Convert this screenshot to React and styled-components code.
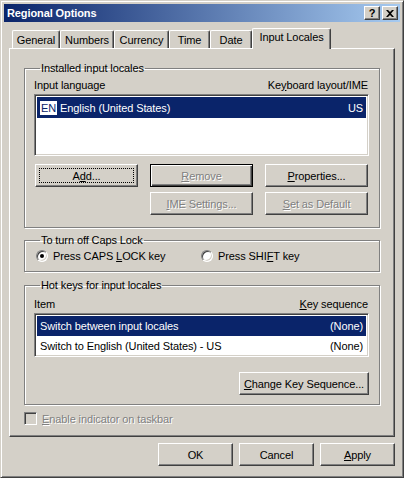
import React from 'react'
import styled, { createGlobalStyle } from 'styled-components'

const GlobalStyle = createGlobalStyle`
  html, body {
    margin: 0;
    padding: 0;
    background: #d4d0c8;
  }
  body {
    font-family: "Liberation Sans", Tahoma, sans-serif;
    font-size: 11px;
    letter-spacing: -0.1px;
    color: #000;
  }
`

const Window = styled.div`
  width: 404px;
  height: 478px;
  box-sizing: border-box;
  background: #d4d0c8;
  border: 1px solid;
  border-color: #d4d0c8 #404040 #404040 #d4d0c8;
  box-shadow: inset 1px 1px #fff, inset -1px -1px #808080;
  padding: 3px;
  display: flex;
  flex-direction: column;
`

const TitleBar = styled.div`
  height: 18px;
  display: flex;
  align-items: center;
  padding: 0 2px 0 2px;
  background: linear-gradient(to right, #0a246a, #a6caf0);
  color: #fff;
  font-weight: bold;
  font-size: 11px;
`

const TitleText = styled.span`
  flex: 1;
  padding-left: 1px;
`

const CaptionButton = styled.div`
  width: 16px;
  height: 14px;
  box-sizing: border-box;
  margin-left: ${p => p.$gap || 0}px;
  background: #d4d0c8;
  border: 1px solid;
  border-color: #fff #404040 #404040 #fff;
  box-shadow: inset -1px -1px #808080;
  display: flex;
  align-items: center;
  justify-content: center;
  color: #000;
  font-weight: bold;
  font-size: 11px;
  line-height: 1;
`

const Body = styled.div`
  padding: 6px 5px 0 5px;
  display: flex;
  flex-direction: column;
`

const TabRow = styled.div`
  height: 20px;
  display: flex;
  align-items: flex-end;
  padding-left: 3px;
`

const Tab = styled.div`
  width: ${p => p.$w}px;
  height: ${p => (p.$active ? 21 : 18)}px;
  margin-bottom: ${p => (p.$active ? -1 : 0)}px;
  box-sizing: border-box;
  position: relative;
  z-index: ${p => (p.$active ? 1 : 0)};
  background: #d4d0c8;
  border-top: 1px solid #fff;
  border-left: 1px solid #fff;
  border-right: 1px solid #404040;
  border-radius: 2px 2px 0 0;
  box-shadow: inset -1px 0 #808080;
  display: flex;
  align-items: ${p => (p.$active ? 'flex-start' : 'center')};
  padding-top: ${p => (p.$active ? 2 : 0)}px;
  justify-content: center;
  white-space: nowrap;
`

const Panel = styled.div`
  height: 389px;
  box-sizing: border-box;
  border: 1px solid;
  border-color: #fff #404040 #404040 #fff;
  box-shadow: inset -1px -1px #808080;
  padding: 13px 14px 0 14px;
  display: flex;
  flex-direction: column;
`

const Group = styled.fieldset`
  margin: ${p => p.$top || 0}px 0 0 0;
  padding: ${p => p.$pt}px 10px ${p => p.$pb}px 9px;
  border: 1px solid #808080;
  box-shadow: inset 1px 1px #fff, 1px 1px #fff;
  min-width: 0;
`

const Legend = styled.legend`
  padding: 0 1px;
  margin-left: 6px;
  line-height: 13px;
`

const HeaderRow = styled.div`
  display: flex;
  justify-content: space-between;
  line-height: 13px;
  padding: 0 1px 0 0;
`

const ListBox = styled.div`
  margin-top: 2px;
  height: ${p => p.$h}px;
  box-sizing: border-box;
  background: #fff;
  border: 1px solid;
  border-color: #808080 #fff #fff #808080;
  box-shadow: inset 1px 1px #404040, inset -1px -1px #d4d0c8;
  padding: 2px;
`

const ListRow = styled.div`
  height: ${p => p.$h || 20}px;
  display: flex;
  align-items: center;
  justify-content: space-between;
  padding: 0 3px 0 3px;
  background: ${p => (p.$selected ? '#0a246a' : 'transparent')};
  color: ${p => (p.$selected ? '#fff' : '#000')};
  white-space: nowrap;
`

const LangTag = styled.span`
  display: inline-block;
  background: #fff;
  color: #0a246a;
  padding: 0 1px;
  margin-right: 3px;
  line-height: 14px;
`

const ButtonGrid = styled.div`
  margin-top: 8px;
  display: grid;
  grid-template-columns: repeat(3, 103px);
  grid-auto-rows: 23px;
  column-gap: 12px;
  row-gap: 5px;
  padding-left: 1px;
`

const Button = styled.div`
  position: relative;
  grid-column: ${p => p.$col || 'auto'};
  width: ${p => (p.$w ? `${p.$w}px` : 'auto')};
  height: 23px;
  box-sizing: border-box;
  background: #d4d0c8;
  border: 1px solid;
  border-color: ${p => (p.$default ? '#000' : '#fff #404040 #404040 #fff')};
  box-shadow: ${p =>
    p.$default
      ? 'inset 1px 1px #fff, inset -1px -1px #404040, inset -2px -2px #808080'
      : 'inset -1px -1px #808080, inset 1px 1px #d4d0c8'};
  display: flex;
  align-items: center;
  justify-content: center;
  white-space: nowrap;
  color: ${p => (p.$disabled ? '#808080' : '#000')};
  text-shadow: ${p => (p.$disabled ? '1px 1px #fff' : 'none')};

  &::after {
    content: '';
    display: ${p => (p.$focus ? 'block' : 'none')};
    position: absolute;
    inset: 3px;
    border: 1px dotted #000;
  }
`

const RadioRow = styled.div`
  height: 16px;
  display: flex;
  align-items: center;
`

const RadioOption = styled.label`
  display: flex;
  align-items: center;
  width: ${p => p.$w}px;
  padding-left: 2px;
`

const RadioCircle = styled.span`
  position: relative;
  width: 12px;
  height: 12px;
  box-sizing: border-box;
  border-radius: 50%;
  background: #fff;
  border: 1px solid;
  border-color: #808080 #fff #fff #808080;
  box-shadow: inset 1px 1px #404040, inset -1px -1px #d4d0c8;
  margin-right: 5px;

  &::after {
    content: '';
    display: ${p => (p.$checked ? 'block' : 'none')};
    position: absolute;
    left: 3px;
    top: 3px;
    width: 4px;
    height: 4px;
    border-radius: 50%;
    background: #000;
  }
`

const ActionRow = styled.div`
  display: flex;
  justify-content: flex-end;
  margin-top: 15px;
`

const CheckRow = styled.div`
  margin-top: 7px;
  display: flex;
  align-items: center;
  color: #808080;
  text-shadow: 1px 1px #fff;
`

const CheckBox = styled.span`
  width: 13px;
  height: 13px;
  box-sizing: border-box;
  background: #d4d0c8;
  border: 1px solid;
  border-color: #808080 #fff #fff #808080;
  box-shadow: inset 1px 1px #404040, inset -1px -1px #d4d0c8;
  margin-right: 5px;
`

const FooterRow = styled.div`
  margin-top: 6px;
  display: flex;
  justify-content: flex-end;
  gap: 6px;
`

const tabs = [
  { label: 'General', w: 48 },
  { label: 'Numbers', w: 54 },
  { label: 'Currency', w: 55 },
  { label: 'Time', w: 41 },
  { label: 'Date', w: 42 },
  { label: 'Input Locales', w: 79, active: true },
]

const CloseGlyph = () => (
  <svg width="8" height="7" viewBox="0 0 8 7">
    <path d="M0 0h2l2 2 2-2h2L5 3.5 8 7H6L4 5 2 7H0l3-3.5z" fill="#000" />
  </svg>
)

export default function App() {
  return (
    <>
      <GlobalStyle />
      <Window>
        <TitleBar>
          <TitleText>Regional Options</TitleText>
          <CaptionButton>?</CaptionButton>
          <CaptionButton $gap={2}><CloseGlyph /></CaptionButton>
        </TitleBar>
        <Body>
          <TabRow>
            {tabs.map(t => (
              <Tab key={t.label} $w={t.w} $active={t.active}>{t.label}</Tab>
            ))}
          </TabRow>
          <Panel>
            <Group $pt={4} $pb={12}>
              <Legend>Installed input locales</Legend>
              <HeaderRow>
                <span>Input language</span>
                <span>Ke<u>y</u>board layout/IME</span>
              </HeaderRow>
              <ListBox $h={62}>
                <ListRow $selected $h={21}>
                  <span><LangTag>EN</LangTag>English (United States)</span>
                  <span>US</span>
                </ListRow>
              </ListBox>
              <ButtonGrid>
                <Button $focus>A<u>d</u>d...</Button>
                <Button $default $disabled><u>R</u>emove</Button>
                <Button><u>P</u>roperties...</Button>
                <Button $col={2} $disabled><u>I</u>ME Settings...</Button>
                <Button $disabled><u>S</u>et as Default</Button>
              </ButtonGrid>
            </Group>
            <Group $top={6} $pt={1} $pb={7}>
              <Legend>To turn off Caps Lock</Legend>
              <RadioRow>
                <RadioOption $w={165}>
                  <RadioCircle $checked />
                  <span>Press CAPS <u>L</u>OCK key</span>
                </RadioOption>
                <RadioOption $w={170}>
                  <RadioCircle />
                  <span>Press SHI<u>F</u>T key</span>
                </RadioOption>
              </RadioRow>
            </Group>
            <Group $top={7} $pt={6} $pb={9}>
              <Legend>Hot keys for input locales</Legend>
              <HeaderRow>
                <span>Item</span>
                <span><u>K</u>ey sequence</span>
              </HeaderRow>
              <ListBox $h={44}>
                <ListRow $selected>
                  <span>Switch between input locales</span>
                  <span>(None)</span>
                </ListRow>
                <ListRow>
                  <span>Switch to English (United States) - US</span>
                  <span>(None)</span>
                </ListRow>
              </ListBox>
              <ActionRow>
                <Button $w={130}><u>C</u>hange Key Sequence...</Button>
              </ActionRow>
            </Group>
            <CheckRow>
              <CheckBox />
              <span><u>E</u>nable indicator on taskbar</span>
            </CheckRow>
          </Panel>
          <FooterRow>
            <Button $w={75}>OK</Button>
            <Button $w={75}>Cancel</Button>
            <Button $w={75}><u>A</u>pply</Button>
          </FooterRow>
        </Body>
      </Window>
    </>
  )
}
